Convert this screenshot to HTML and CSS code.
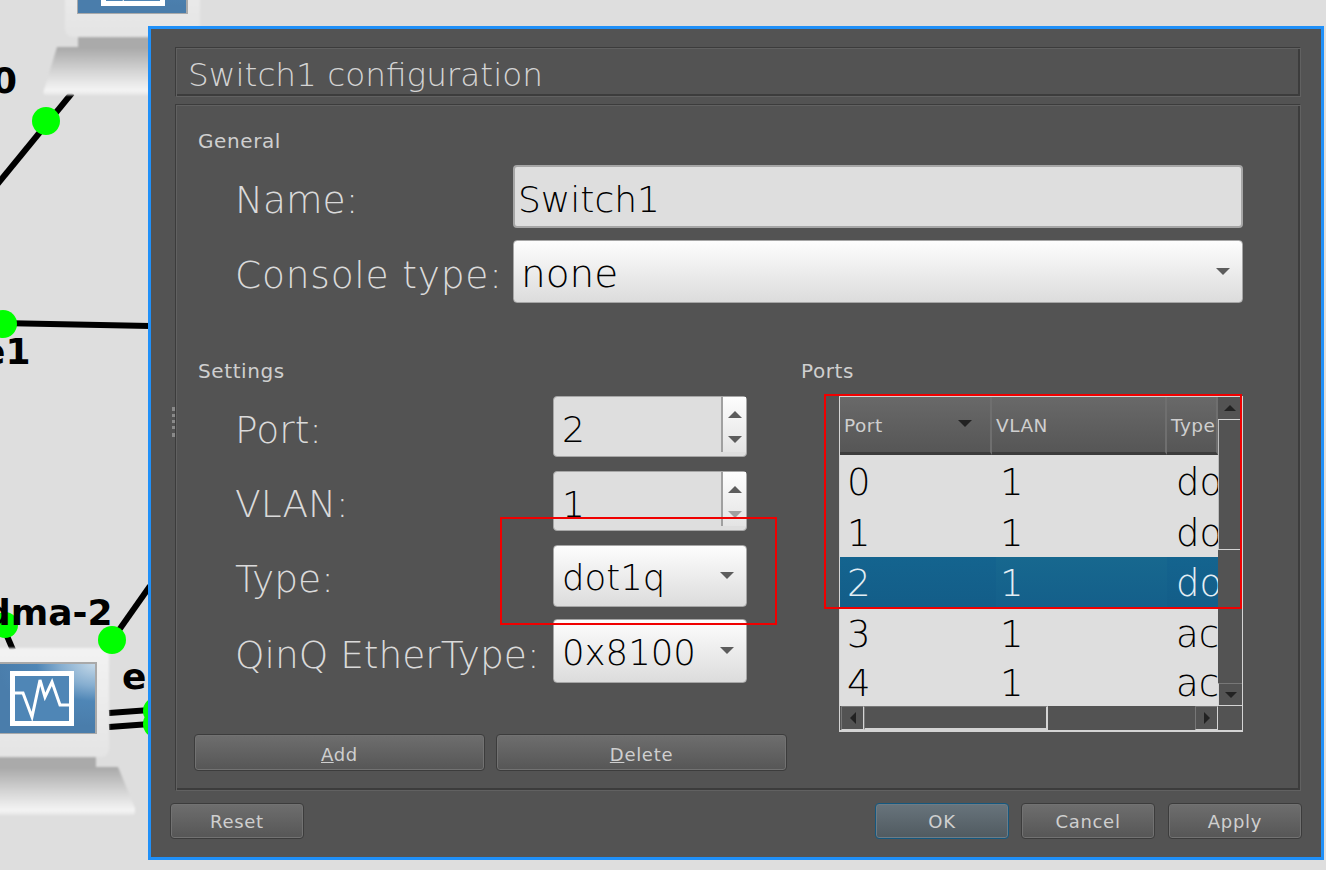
FILE: index.html
```html
<!DOCTYPE HTML>
<html lang="en">
<head>
    <meta charset="UTF-8">
    <meta name="viewport" content="width=device-width, initial-scale=1.0">
    <title>Switch1 configuration</title>
    <link rel="stylesheet" href="styles.css">
</head>
<body>

    <!-- topology canvas behind the dialog -->
    <svg class="topology" width="1326" height="870" viewBox="0 0 1326 870">
        <defs>
            <linearGradient id="bodyGrad" x1="0" y1="0" x2="0" y2="1">
                <stop offset="0" stop-color="#f3f3f3"/>
                <stop offset="1" stop-color="#e4e4e4"/>
            </linearGradient>
            <linearGradient id="baseGrad" x1="0" y1="0" x2="0" y2="1">
                <stop offset="0" stop-color="#a8a8a8"/>
                <stop offset="0.55" stop-color="#d8d8d8"/>
                <stop offset="0.9" stop-color="#f4f4f4"/>
                <stop offset="1" stop-color="#e6e6e6"/>
            </linearGradient>
            <radialGradient id="screenGrad" cx="1" cy="0" r="0.9">
                <stop offset="0" stop-color="#c4d8e8"/>
                <stop offset="0.35" stop-color="#86aed0"/>
                <stop offset="0.6" stop-color="#4f86b6"/>
                <stop offset="1" stop-color="#4a7dab"/>
            </radialGradient>
            <filter id="soft" x="-5%" y="-5%" width="110%" height="110%">
                <feGaussianBlur stdDeviation="0.8"/>
            </filter>
            <g id="computer">
                <g filter="url(#soft)">
                    <path d="M-8 119 H144 L161 160 V164 Q161 167 158 167 H-19 Q-23 167 -21 162 Z" fill="url(#baseGrad)"/>
                    <rect x="13" y="105" width="109" height="15" fill="#aaaaaa"/>
                    <rect x="0" y="0" width="135" height="109" rx="8" fill="url(#bodyGrad)"/>
                </g>
                <rect x="12" y="14" width="111" height="72" fill="#a9a9a9"/>
                <rect x="13" y="16" width="108" height="69" fill="url(#screenGrad)"/>
                <rect x="38.5" y="25.5" width="59" height="50" fill="#4f86b6" stroke="#fff" stroke-width="5"/>
                <path d="M41 45 H49 L58 69 L66 32 L71 49 L78 34 L86 57 H95" fill="none" stroke="#fff" stroke-width="3"/>
            </g>
        </defs>

        <g stroke="#000" stroke-width="6">
            <line x1="72" y1="93" x2="-4" y2="186"/>
            <line x1="0" y1="323" x2="150" y2="326"/>
            <line x1="150" y1="586" x2="112" y2="640"/>
            <line x1="7" y1="636" x2="13" y2="650"/>
            <line x1="109" y1="713" x2="150" y2="710"/>
            <line x1="109" y1="727" x2="150" y2="724"/>
        </g>

        <use href="#computer" x="65" y="-72"/>
        <use href="#computer" x="-26" y="648"/>

        <g fill="#00ff00">
            <circle cx="46" cy="121" r="14"/>
            <circle cx="3" cy="324" r="14"/>
            <circle cx="5" cy="625" r="13"/>
            <circle cx="112" cy="640" r="14"/>
            <circle cx="157" cy="711" r="14"/>
            <circle cx="157" cy="724" r="14"/>
        </g>
    </svg>

    <span class="node-label label-a">0</span>
    <span class="node-label label-b">e1</span>
    <span class="node-label label-c">dma-2</span>
    <span class="node-label label-d">e</span>

    <div class="dialog">
        <div class="grip"></div>
        <div class="frame title-frame">Switch1 configuration</div>

        <div class="frame main-frame">
            <div class="group-title">General</div>
            <div class="general-grid">
                <label class="big-label">Name:</label>
                <div class="line-edit">Switch1</div>
                <label class="big-label console-label">Console type:</label>
                <div class="combo console-combo">none<span class="arrow-down"></span></div>
            </div>

            <div class="columns">
                <div class="settings">
                    <div class="group-title">Settings</div>
                    <div class="settings-grid">
                        <label class="big-label">Port:</label>
                        <div class="spin">
                            <span class="spin-value">2</span>
                            <span class="spin-btns"><i class="arrow-up"></i><i class="arrow-down"></i></span>
                        </div>
                        <label class="big-label">VLAN:</label>
                        <div class="spin">
                            <span class="spin-value">1</span>
                            <span class="spin-btns"><i class="arrow-up"></i><i class="arrow-down faded"></i></span>
                        </div>
                        <label class="big-label">Type:</label>
                        <div class="combo">dot1q<span class="arrow-down"></span></div>
                        <label class="big-label">QinQ EtherType:</label>
                        <div class="combo row-qinq">0x8100<span class="arrow-down"></span></div>
                    </div>
                    <div class="add-delete">
                        <button class="btn"><u>A</u>dd</button>
                        <button class="btn"><u>D</u>elete</button>
                    </div>
                </div>

                <div class="ports">
                    <div class="group-title">Ports</div>
                    <div class="table">
                        <div class="table-main">
                            <div class="table-view">
                                <div class="thead">
                                    <div class="th">Port<span class="sort-arrow"></span></div>
                                    <div class="th">VLAN</div>
                                    <div class="th">Type</div>
                                </div>
                                <div class="tr r0"><div class="td">0</div><div class="td">1</div><div class="td">dot1q</div></div>
                                <div class="tr r1"><div class="td">1</div><div class="td">1</div><div class="td">dot1q</div></div>
                                <div class="tr r2 selected"><div class="td">2</div><div class="td">1</div><div class="td">dot1q</div></div>
                                <div class="tr r3"><div class="td">3</div><div class="td">1</div><div class="td">access</div></div>
                                <div class="tr r4"><div class="td">4</div><div class="td">1</div><div class="td">access</div></div>
                            </div>
                            <div class="vbar">
                                <div class="sb-btn vbtn"><i class="sb-up"></i></div>
                                <div class="vthumb"></div>
                                <div class="sb-track"></div>
                                <div class="sb-btn vbtn down"><i class="sb-down"></i></div>
                            </div>
                        </div>
                        <div class="hbar">
                            <div class="sb-btn hbtn"><i class="sb-left"></i></div>
                            <div class="hthumb"></div>
                            <div class="sb-track"></div>
                            <div class="sb-btn hbtn"><i class="sb-right"></i></div>
                            <div class="corner"></div>
                        </div>
                    </div>
                </div>
            </div>
        </div>

        <div class="button-row">
            <button class="btn">Reset</button>
            <span class="spacer"></span>
            <button class="btn btn-default">OK</button>
            <button class="btn">Cancel</button>
            <button class="btn btn-apply">Apply</button>
        </div>
    </div>

    <!-- red highlight boxes drawn on the screenshot -->
    <div class="mark mark-type"></div>
    <div class="mark mark-table"></div>

</body>
</html>
```

FILE: styles.css
```css
* {
    box-sizing: border-box;
}
html, body {
    height: 100%;
}
body {
    margin: 0;
    background-color: #dedede;
    font-family: "DejaVu Sans", sans-serif;
    font-weight: 200;
    overflow: hidden;
    position: relative;
}
.topology {
    position: absolute;
    left: 0;
    top: 0;
}
.node-label {
    position: absolute;
    font-family: "DejaVu Sans", sans-serif;
    font-weight: 700;
    font-size: 36px;
    line-height: 40px;
    color: #000;
}
.label-a { left: -8px; top: 61px; }
.label-b { left: -19px; top: 332px; }
.label-c { left: -15px; top: 593px; }
.label-d { left: 122px; top: 657px; }

/* dialog */
.dialog {
    position: absolute;
    left: 148px;
    top: 26px;
    width: 1176px;
    height: 834px;
    background-color: #535353;
    border: 3px solid #2090f8;
    color: #d8d8d8;
}
.grip {
    position: absolute;
    left: 21px;
    top: 378px;
    width: 4px;
    height: 30px;
    border-left: 3px dotted #8a8a8a;
}
.frame {
    border: 1px solid;
    border-color: #3c3c3c #616161 #616161 #3c3c3c;
    box-shadow: inset 1px 1px 0 #616161, inset -2px -2px 0 #3c3c3c;
}
.title-frame {
    margin: 18px 20px 0 24px;
    height: 50px;
    padding-left: 12px;
    font-size: 32.7px;
    line-height: 54px;
    color: #d4d4d4;
}
.main-frame {
    margin: 7px 20px 0 24px;
    height: 687px;
    padding: 26px 0 0 22px;
}
.group-title {
    font-size: 20px;
    font-weight: 400;
    letter-spacing: 0.6px;
    line-height: 20px;
    color: #cfcfcf;
}
.big-label {
    font-size: 37.5px;
    padding: 6px 0 0 37px;
    display: flex;
    align-items: center;
    color: #dadada;
    white-space: nowrap;
}
.console-label {
    letter-spacing: 0.8px;
}
.general-grid {
    display: grid;
    grid-template-columns: 315px 730px;
    grid-template-rows: 63px 63px;
    row-gap: 12px;
    margin-top: 14px;
}
.line-edit {
    background-color: #dedede;
    border: 2px solid #a6a6a6;
    border-radius: 4px;
    color: #000;
    font-size: 36px;
    line-height: 65px;
    padding-left: 3px;
}
.combo {
    position: relative;
    background: linear-gradient(#fdfdfd, #dcdcdc);
    border: 1px solid #a6a6a6;
    border-radius: 4px;
    color: #000;
    font-size: 35.5px;
    padding: 2px 0 0 8px;
    display: flex;
    align-items: center;
}
.console-combo {
    font-size: 39px;
    padding: 4px 0 0 7px;
}
.arrow-down,
.arrow-up {
    display: block;
    width: 0;
    height: 0;
    border-left: 7px solid transparent;
    border-right: 7px solid transparent;
}
.arrow-down {
    border-top: 7px solid #5c5c5c;
}
.arrow-up {
    border-bottom: 7px solid #5c5c5c;
}
.arrow-down.faded {
    border-top-color: #a0a0a0;
}
.combo > .arrow-down {
    position: absolute;
    right: 12px;
    top: 50%;
    margin-top: -4px;
}

/* settings / ports */
.columns {
    display: flex;
    margin-top: 58px;
}
.settings {
    width: 603px;
    flex: none;
}
.settings-grid {
    display: grid;
    grid-template-columns: 355px 194px;
    grid-template-rows: 61px 60px 62px 62px;
    row-gap: 14px;
    margin-top: 15px;
}
.row-qinq {
    margin-top: -2px;
}
.spin {
    display: flex;
    background-color: #dedede;
    border: 1px solid #a6a6a6;
    border-radius: 4px;
    color: #000;
    font-size: 36px;
}
.spin-value {
    flex: 1;
    padding: 6px 0 0 8px;
    display: flex;
    align-items: center;
}
.spin-btns {
    width: 25px;
    border-left: 2px solid #a0a0a0;
    margin: 0 0 4px;
    background: linear-gradient(#fdfdfd, #e4e4e4);
    display: flex;
    flex-direction: column;
    align-items: center;
    gap: 18px;
    padding-top: 14px;
}
.add-delete {
    display: flex;
    gap: 11px;
    margin: 51px 0 0 -4px;
}
.add-delete .btn {
    width: 291px;
    height: 37px;
    padding-top: 3px;
}
.btn {
    height: 36px;
    width: 134px;
    padding: 0;
    font-family: "DejaVu Sans", sans-serif;
    font-weight: 400;
    font-size: 18px;
    letter-spacing: 0.7px;
    color: #cfcfcf;
    background: linear-gradient(#6e6e6e, #565656);
    border: 1px solid #3c3c3c;
    border-radius: 4px;
    box-shadow: inset 0 0 0 1px #727272;
}
.btn-default {
    background: linear-gradient(#68747c, #505a60);
    border-color: #14587f;
    box-shadow: inset 0 0 0 1px #6d7c86;
}
.btn-apply {
    margin-left: 1px;
}
.button-row {
    display: flex;
    gap: 12px;
    margin: 12px 19px 0 19px;
}
.spacer {
    flex: 1;
}

/* table */
.ports {
    flex: none;
}
.table {
    margin: 15px 0 0 38px;
    width: 404px;
    height: 336px;
    border: 1px solid #d4d4d4;
    border-bottom-width: 2px;
    display: flex;
    flex-direction: column;
}
.table-main {
    display: flex;
    height: 309px;
}
.table-view {
    width: 378px;
    flex: none;
    overflow: hidden;
}
.thead {
    display: grid;
    grid-template-columns: 152px 175px 51px;
    height: 58px;
}
.th {
    position: relative;
    background: linear-gradient(#696969, #565656);
    border-right: 2px solid #6f6f6f;
    border-bottom: 3px solid #3c3c3c;
    font-size: 18.5px;
    font-weight: 400;
    letter-spacing: 0.5px;
    color: #cfcfcf;
    line-height: 58px;
    padding-left: 4px;
    overflow: hidden;
    white-space: nowrap;
}
.sort-arrow {
    position: absolute;
    right: 18px;
    top: 23px;
    border-left: 7px solid transparent;
    border-right: 7px solid transparent;
    border-top: 7px solid #222;
}
.tr {
    display: grid;
    grid-template-columns: 152px 175px 51px;
    background-color: #dedede;
    color: #000;
    font-size: 37px;
    align-items: center;
}
.r0 { height: 52px; }
.r1 { height: 50px; }
.r2 { height: 51px; }
.r3 { height: 51px; }
.r4 { height: 47px; }
.td {
    padding: 2px 0 0 7px;
    overflow: hidden;
    white-space: nowrap;
}
.td:nth-child(2) { padding-left: 8px; }
.td:nth-child(3) { padding-left: 9px; }
.tr.selected {
    background: linear-gradient(#14648f, #135d88);
    color: #e4eef4;
}
.tr.selected .td:nth-child(2) {
    background: linear-gradient(#17688f, #145f8a);
    height: 100%;
    display: flex;
    align-items: center;
    margin-left: 4px;
    padding-left: 4px;
}
.vbar {
    flex: 1;
    display: flex;
    flex-direction: column;
    background-color: #535353;
}
.sb-track {
    flex: 1;
    background-color: #535353;
}
.sb-btn {
    display: flex;
    align-items: center;
    justify-content: center;
    background-color: #535353;
    flex: none;
}
.vbtn {
    height: 23px;
    border-bottom: 1px solid #d4d4d4;
}
.vbtn.down {
    border: 1px solid #d4d4d4;
    border-top-color: #777;
    border-right: none;
}
.vthumb {
    height: 130px;
    flex: none;
    border-left: 1px solid #bdbdbd;
    border-bottom: 1px solid #d4d4d4;
}
.hbar {
    flex: 1;
    display: flex;
    background-color: #535353;
    padding-left: 1px;
}
.hbtn {
    width: 23px;
    border: 1px solid #777;
    border-right-color: #d4d4d4;
    border-bottom-color: #d4d4d4;
}
.hthumb {
    width: 184px;
    flex: none;
    border: 1px solid #777;
    border-right: 2px solid #d4d4d4;
    border-bottom: 2px solid #d4d4d4;
}
.corner {
    width: 24px;
    flex: none;
}
.sb-up,
.sb-down,
.sb-left,
.sb-right {
    width: 0;
    height: 0;
    border: 6px solid transparent;
}
.sb-up { border-bottom-color: #222; border-top-width: 0; }
.sb-down { border-top-color: #222; border-bottom-width: 0; }
.sb-left { border-right-color: #222; border-left-width: 0; }
.sb-right { border-left-color: #222; border-right-width: 0; }

/* red boxes */
.mark {
    position: absolute;
    border: 2px solid #f00000;
}
.mark-type {
    left: 500px;
    top: 517px;
    width: 277px;
    height: 108px;
}
.mark-table {
    left: 824px;
    top: 394px;
    width: 418px;
    height: 215px;
}
```
